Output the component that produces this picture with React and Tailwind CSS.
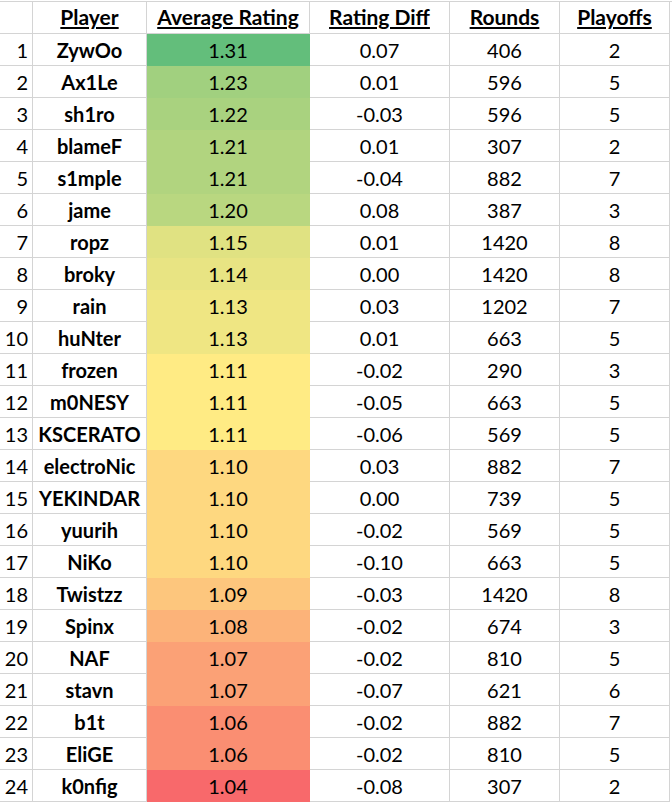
import React from "react";

const rows = [
  [1, "ZywOo", "1.31", "0.07", 406, 2, "bg-[#63be7b] border-[#63be7b]"],
  [2, "Ax1Le", "1.23", "0.01", 596, 5, "bg-[#a1d07f] border-[#a1d07f]"],
  [3, "sh1ro", "1.22", "-0.03", 596, 5, "bg-[#a9d27f] border-[#a9d27f]"],
  [4, "blameF", "1.21", "0.01", 307, 2, "bg-[#b1d47f] border-[#b1d47f]"],
  [5, "s1mple", "1.21", "-0.04", 882, 7, "bg-[#b1d47f] border-[#b1d47f]"],
  [6, "jame", "1.20", "0.08", 387, 3, "bg-[#b9d780] border-[#b9d780]"],
  [7, "ropz", "1.15", "0.01", 1420, 8, "bg-[#e0e282] border-[#e0e282]"],
  [8, "broky", "1.14", "0.00", 1420, 8, "bg-[#e8e483] border-[#e8e483]"],
  [9, "rain", "1.13", "0.03", 1202, 7, "bg-[#efe683] border-[#efe683]"],
  [10, "huNter", "1.13", "0.01", 663, 5, "bg-[#efe683] border-[#efe683]"],
  [11, "frozen", "1.11", "-0.02", 290, 3, "bg-[#ffeb84] border-[#ffeb84]"],
  [12, "m0NESY", "1.11", "-0.05", 663, 5, "bg-[#ffeb84] border-[#ffeb84]"],
  [13, "KSCERATO", "1.11", "-0.06", 569, 5, "bg-[#ffeb84] border-[#ffeb84]"],
  [14, "electroNic", "1.10", "0.03", 882, 7, "bg-[#fed880] border-[#fed880]"],
  [15, "YEKINDAR", "1.10", "0.00", 739, 5, "bg-[#fed880] border-[#fed880]"],
  [16, "yuurih", "1.10", "-0.02", 569, 5, "bg-[#fed880] border-[#fed880]"],
  [17, "NiKo", "1.10", "-0.10", 663, 5, "bg-[#fed880] border-[#fed880]"],
  [18, "Twistzz", "1.09", "-0.03", 1420, 8, "bg-[#fdc67d] border-[#fdc67d]"],
  [19, "Spinx", "1.08", "-0.02", 674, 3, "bg-[#fcb379] border-[#fcb379]"],
  [20, "NAF", "1.07", "-0.02", 810, 5, "bg-[#fba176] border-[#fba176]"],
  [21, "stavn", "1.07", "-0.07", 621, 6, "bg-[#fba176] border-[#fba176]"],
  [22, "b1t", "1.06", "-0.02", 882, 7, "bg-[#fa8e72] border-[#fa8e72]"],
  [23, "EliGE", "1.06", "-0.02", 810, 5, "bg-[#fa8e72] border-[#fa8e72]"],
  [24, "k0nfig", "1.04", "-0.08", 307, 2, "bg-[#f8696b] border-[#f8696b]"],
];

const rowCls = "grid h-8 grid-cols-[33px_114px_163px_140px_110px_110px_2px]";
const cell = "border-r border-b border-[#d4d4d4] pt-1 leading-6 text-center";

const Head = ({ children }) => (
  <div className="border-r border-b border-[#d4d4d4] pt-[3px] text-center text-[21px] font-bold leading-6">
    <span className="underline decoration-2 underline-offset-2">{children}</span>
  </div>
);

export default function App() {
  return (
    <div className="min-h-screen bg-white pt-px font-['Lato',sans-serif] text-[20px] text-black">
      <div className="border-t border-[#d4d4d4]">
        {/* Header row */}
        <div className={rowCls}>
          <div className="border-r border-b border-[#d4d4d4]" />
          <Head>Player</Head>
          <Head>Average Rating</Head>
          <Head>Rating Diff</Head>
          <Head>Rounds</Head>
          <Head>Playoffs</Head>
          <div />
        </div>

        {rows.map(([n, name, rating, diff, rounds, playoffs, color]) => (
          <div key={n} className={rowCls}>
            <div className="border-r border-b border-[#d4d4d4] pr-1 pt-1 text-right leading-6">{n}</div>
            <div className={`${cell} font-bold`}>{name}</div>
            <div className={`border-r border-b pt-1 text-center leading-6 ${color}`}>{rating}</div>
            <div className={cell}>{diff}</div>
            <div className={cell}>{rounds}</div>
            <div className={cell}>{playoffs}</div>
            <div />
          </div>
        ))}
      </div>
    </div>
  );
}
